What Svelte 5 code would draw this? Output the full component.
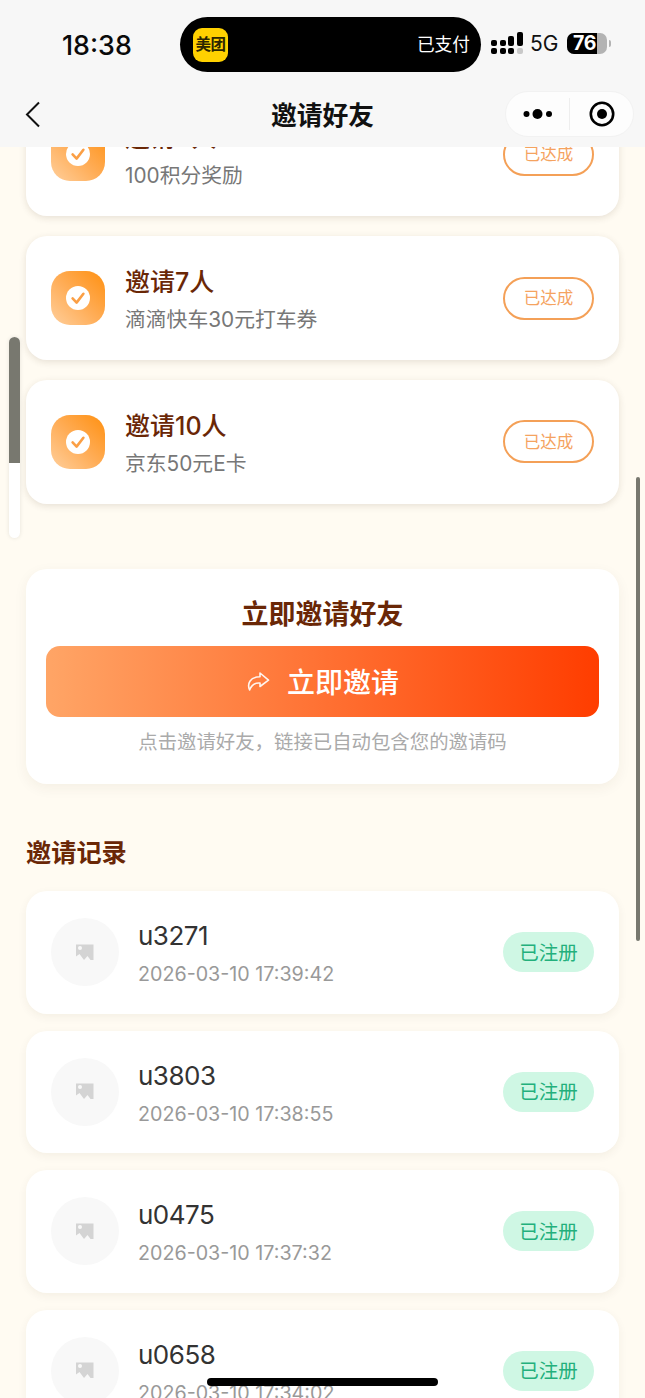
<script>
  const rewards = [
    { title: '邀请4人', desc: '100积分奖励' },
    { title: '邀请7人', desc: '滴滴快车30元打车券' },
    { title: '邀请10人', desc: '京东50元E卡' }
  ];
  const records = [
    { name: 'u3271', time: '2026-03-10 17:39:42' },
    { name: 'u3803', time: '2026-03-10 17:38:55' },
    { name: 'u0475', time: '2026-03-10 17:37:32' },
    { name: 'u0658', time: '2026-03-10 17:34:02' }
  ];
</script>

<div class="page">
  <header class="top">
    <div class="status">
      <span class="clock">18:38</span>
      <div class="island">
        <span class="app"><span class="app-text">美团</span></span>
        <span class="paid">已支付</span>
      </div>
      <svg class="signal" width="32" height="24" viewBox="0 0 32 24" aria-hidden="true">
        <g fill="#000">
          <rect x="0" y="8" width="6" height="6" rx="2" />
          <rect x="0" y="16" width="6" height="6" rx="2" />
          <rect x="9" y="8" width="6" height="6" rx="2" />
          <rect x="9" y="16" width="6" height="6" rx="2" />
          <rect x="17" y="4" width="6" height="10" rx="2" />
          <rect x="17" y="16" width="6" height="6" rx="2" />
          <rect x="26" y="0" width="6" height="14" rx="2" />
        </g>
        <rect x="26" y="16" width="6" height="6" rx="2" fill="#c8c8c8" />
      </svg>
      <span class="net">5G</span>
      <div class="battery">
        <div class="cell"><span class="level">76</span></div>
        <span class="nub"></span>
      </div>
    </div>
    <nav class="nav">
      <svg class="back" width="16" height="27" viewBox="0 0 16 27" aria-hidden="true">
        <path d="M14 1.5 2 13.5l12 12" fill="none" stroke="#111" stroke-width="2" />
      </svg>
      <h1 class="nav-title">邀请好友</h1>
      <div class="capsule">
        <div class="cap-side">
          <svg width="30" height="12" viewBox="0 0 30 12" aria-hidden="true">
            <circle cx="3.5" cy="6" r="3" fill="#000" />
            <circle cx="14.5" cy="6" r="5" fill="#000" />
            <circle cx="26" cy="6" r="3" fill="#000" />
          </svg>
        </div>
        <span class="cap-line"></span>
        <div class="cap-side">
          <svg width="26" height="26" viewBox="0 0 26 26" aria-hidden="true">
            <circle cx="13" cy="13" r="11.2" fill="none" stroke="#000" stroke-width="2.6" />
            <circle cx="13" cy="13" r="5" fill="#000" />
          </svg>
        </div>
      </div>
    </nav>
  </header>

  <main class="viewport">
    <div class="content">
      <section class="rewards">
        {#each rewards as r}
          <article class="card reward">
            <div class="badge-icon">
              <svg width="24" height="24" viewBox="0 0 24 24" aria-hidden="true">
                <circle cx="12" cy="12" r="12" fill="#fff" />
                <path d="M6.6 12.4 10.6 16.6 17.4 7.8" fill="none" stroke="#fb9f45" stroke-width="2.6" stroke-linecap="round" stroke-linejoin="round" />
              </svg>
            </div>
            <div class="reward-text">
              <div class="reward-title">{r.title}</div>
              <div class="reward-desc">{r.desc}</div>
            </div>
            <span class="achieved">已达成</span>
          </article>
        {/each}
      </section>

      <section class="card invite">
        <h2 class="invite-title">立即邀请好友</h2>
        <button class="invite-btn">
          <svg width="24" height="21" viewBox="0 0 24 21" aria-hidden="true">
            <path d="M14 2 22.5 9.2 14 15.5V12C9 11.6 5.2 14.5 3.6 19 1 13 3.6 6 14 5.8Z" fill="none" stroke="#fff" stroke-width="1.6" stroke-linejoin="round" opacity=".92" />
          </svg>
          <span class="btn-label">立即邀请</span>
        </button>
        <p class="hint">点击邀请好友，链接已自动包含您的邀请码</p>
      </section>

      <h2 class="section-title">邀请记录</h2>
      <section class="records">
        {#each records as rec}
          <article class="card record">
            <div class="avatar">
              <svg width="20" height="19" viewBox="0 0 20 19" aria-hidden="true">
                <path d="M1 1.5h17.5V17h-3l-3-4-3.5 4L4.5 11 1 13.5Z" fill="#d4d4d4" />
                <circle cx="5" cy="5" r="2" fill="#f8f8f8" />
              </svg>
            </div>
            <div class="record-text">
              <div class="record-name">{rec.name}</div>
              <div class="record-time">{rec.time}</div>
            </div>
            <span class="registered">已注册</span>
          </article>
        {/each}
      </section>
    </div>
  </main>

  <div class="scroll-left"><span class="scroll-left-fill"></span></div>
  <div class="scroll-right"></div>
  <div class="home"></div>
</div>

<style>
  :global(body) {
    margin: 0;
    background: #fffbf2;
  }
  .page {
    position: relative;
    width: 645px;
    height: 1398px;
    overflow: hidden;
    display: flex;
    flex-direction: column;
    background: #fffbf2;
    font-family: Inter, "Noto Sans CJK SC", sans-serif;
  }
  .top {
    flex: none;
    height: 147px;
    background: #f7f7f7;
    position: relative;
    z-index: 2;
  }
  .status {
    height: 89px;
    display: flex;
    align-items: flex-start;
  }
  .clock {
    margin: 28px 0 0 62px;
    width: 118px;
    font-size: 26.8px;
    line-height: 34px;
    font-weight: 500;
    color: #0a0a0a;
  }
  .island {
    margin-top: 17px;
    width: 301px;
    height: 55px;
    border-radius: 28px;
    background: #000;
    display: flex;
    align-items: center;
    justify-content: space-between;
    padding: 0 11px 0 13px;
    box-sizing: border-box;
  }
  .app {
    width: 35px;
    height: 34px;
    border-radius: 9px;
    background: #ffd100;
    display: flex;
    align-items: center;
    justify-content: center;
  }
  .app-text {
    font-size: 15.5px;
    line-height: 18px;
    font-weight: 600;
    color: #2b2500;
    letter-spacing: -0.5px;
  }
  .paid {
    font-size: 17.7px;
    line-height: 22px;
    color: #fff;
  }
  .signal {
    margin: 32px 0 0 10px;
    flex: none;
  }
  .net {
    margin: 31px 0 0 7px;
    font-size: 21px;
    line-height: 26px;
    color: #111;
    width: 37px;
    font-family: Inter, sans-serif;
  }
  .battery {
    margin-top: 33px;
    display: flex;
    align-items: center;
  }
  .cell {
    width: 40px;
    height: 21px;
    border-radius: 7px;
    overflow: hidden;
    background: #b3b3b3;
    display: flex;
  }
  .level {
    width: 30px;
    background: #000;
    color: #fff;
    font-size: 19.5px;
    line-height: 21px;
    font-weight: 700;
    text-align: right;
    letter-spacing: -0.3px;
    padding-right: 1px;
    box-sizing: border-box;
  }
  .nub {
    width: 2px;
    height: 7px;
    margin-left: 2px;
    border-radius: 0 2px 2px 0;
    background: #b3b3b3;
  }
  .nav {
    position: relative;
    height: 58px;
    display: flex;
    align-items: center;
    justify-content: center;
  }
  .back {
    position: absolute;
    left: 25px;
    top: 12px;
  }
  .nav-title {
    margin: 0 0 4px;
    font-size: 25.8px;
    line-height: 34px;
    font-weight: 600;
    color: #111;
  }
  .capsule {
    position: absolute;
    left: 505px;
    top: 2px;
    width: 129px;
    height: 46px;
    border-radius: 23px;
    background: #fdfdfd;
    border: 1px solid #f2f2f2;
    box-sizing: border-box;
    display: flex;
    align-items: center;
  }
  .cap-side {
    flex: 1;
    display: flex;
    justify-content: center;
    align-items: center;
  }
  .cap-line {
    width: 1px;
    height: 32px;
    background: #eeeeee;
  }
  .viewport {
    flex: 1;
    overflow: hidden;
  }
  .content {
    margin-top: -55px;
    padding: 0 26px;
  }
  .rewards {
    display: flex;
    flex-direction: column;
    gap: 19.5px;
  }
  .card {
    background: #fff;
    border-radius: 21px;
    box-shadow: 0 2px 7px rgba(70, 50, 20, 0.13);
  }
  .reward {
    height: 124.4px;
    display: flex;
    align-items: center;
    padding: 0 25px;
    box-sizing: border-box;
  }
  .badge-icon {
    flex: none;
    width: 54px;
    height: 54px;
    border-radius: 19px;
    background: linear-gradient(45deg, #ffcf9c 0%, #ffac55 50%, #ff9010 100%);
    display: flex;
    align-items: center;
    justify-content: center;
  }
  .reward-text {
    flex: 1;
    margin-left: 20px;
    padding-top: 5px;
  }
  .reward-title {
    font-size: 25px;
    line-height: 30px;
    font-weight: 500;
    color: #6a2706;
  }
  .reward-desc {
    margin-top: 9px;
    font-size: 20.8px;
    line-height: 28px;
    color: #777;
  }
  .achieved {
    flex: none;
    width: 91px;
    height: 43px;
    border: 2px solid #f4a057;
    border-radius: 22px;
    box-sizing: border-box;
    display: flex;
    align-items: center;
    justify-content: center;
    font-size: 16.5px;
    color: #f5a35f;
    padding-bottom: 2px;
  }
  .invite {
    margin-top: 65px;
    height: 215px;
    padding: 27px 20px 0;
    box-sizing: border-box;
    display: flex;
    flex-direction: column;
    align-items: center;
    box-shadow: 0 4px 14px rgba(70, 50, 20, 0.06);
  }
  .invite-title {
    margin: 1px 0 0;
    font-size: 27px;
    line-height: 36px;
    font-weight: 600;
    color: #6a2706;
  }
  .invite-btn {
    margin-top: 13px;
    width: 100%;
    height: 71px;
    border: 0;
    border-radius: 14px;
    background: linear-gradient(90deg, #ffa566 0%, #ff3d00 100%);
    color: #fff;
    font-family: inherit;
    font-size: 28px;
    font-weight: 500;
    display: flex;
    align-items: center;
    justify-content: center;
    gap: 17px;
    padding: 0 1px 0 1px;
  }
  .btn-label {
    margin-top: -2px;
  }
  .hint {
    margin: 12px 0 0;
    font-size: 19.4px;
    line-height: 26px;
    color: #aaa;
    white-space: nowrap;
  }
  .section-title {
    margin: 51px 0 0;
    font-size: 25.2px;
    line-height: 36px;
    font-weight: 600;
    color: #6a2706;
  }
  .records {
    margin-top: 20px;
    display: flex;
    flex-direction: column;
    gap: 17px;
  }
  .record {
    height: 122.5px;
    display: flex;
    align-items: center;
    padding: 0 25px;
    box-sizing: border-box;
    box-shadow: 0 3px 10px rgba(70, 50, 20, 0.06);
  }
  .avatar {
    flex: none;
    width: 68px;
    height: 68px;
    border-radius: 50%;
    background: #f8f8f8;
    display: flex;
    align-items: center;
    justify-content: center;
  }
  .record-text {
    flex: 1;
    margin-left: 19px;
    padding-top: 3px;
  }
  .record-name {
    font-family: Inter, "Noto Sans CJK SC", sans-serif;
    font-size: 26px;
    line-height: 32px;
    letter-spacing: -0.5px;
    color: #333;
  }
  .record-time {
    margin-top: 9px;
    font-family: Inter, sans-serif;
    font-size: 19.7px;
    line-height: 26px;
    color: #999;
    white-space: nowrap;
  }
  .registered {
    flex: none;
    width: 91px;
    height: 40px;
    border-radius: 20px;
    background: #cff7e4;
    color: #23b07c;
    font-size: 19.5px;
    display: flex;
    align-items: center;
    justify-content: center;
    padding-bottom: 2px;
    box-sizing: border-box;
  }
  .scroll-left {
    position: absolute;
    left: 9px;
    top: 337px;
    width: 11px;
    height: 201px;
    border-radius: 6px;
    background: #fff;
    overflow: hidden;
    box-shadow: 0 0 4px rgba(0, 0, 0, 0.1);
  }
  .scroll-left-fill {
    display: block;
    height: 126px;
    background: #78786f;
  }
  .scroll-right {
    position: absolute;
    left: 636px;
    top: 477px;
    width: 4px;
    height: 464px;
    border-radius: 2px;
    background: #78786f;
  }
  .home {
    position: absolute;
    left: 207px;
    top: 1378px;
    width: 231px;
    height: 8px;
    border-radius: 4px;
    background: #000;
  }
</style>
